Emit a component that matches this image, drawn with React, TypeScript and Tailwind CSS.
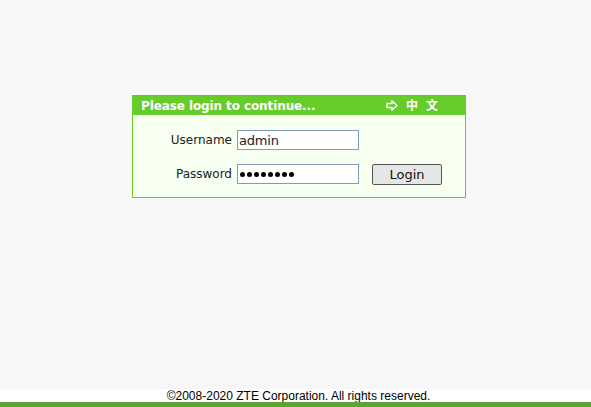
import React from "react";

export default function App() {
  return (
    <div className="min-h-screen h-[407px] flex flex-col bg-[#f7f7f7]" style={{ fontFamily: "'DejaVu Sans', Verdana, sans-serif" }}>
      <div className="flex-1">
        <div className="ml-[132px] mt-[95px] w-[334px] h-[103px] border border-[#66cc2a] bg-[#f6fff0] flex flex-col">
          <div className="h-[19px] bg-[#66cc2a] flex items-center justify-between pl-[8px] pr-[27px] text-white font-bold text-[12px] leading-none">
            <span className="tracking-[-0.1px]">Please login to continue...</span>
            <span className="flex items-center gap-[8px] text-[12px]" style={{ fontFamily: "'DejaVu Sans', 'Noto Sans CJK SC', sans-serif" }}>
              <svg width="12" height="11" viewBox="0 0 12 11" className="block">
                <path d="M1 3.5 H6 V0.9 L11 5.5 L6 10.1 V7.5 H1 Z" fill="none" stroke="white" strokeWidth="1.4" strokeLinejoin="miter" />
              </svg>
              <span>中</span>
              <span>文</span>
            </span>
          </div>
          <div className="flex flex-col text-[12px] text-[#222]" style={{ fontFamily: "'DejaVu Sans', Verdana, sans-serif" }}>
            <div className="flex items-center mt-[15px] h-[20px]">
              <span className="w-[104px] text-right pr-[5px]">Username</span>
              <input
                readOnly
                value="admin"
                className="w-[122px] h-[20px] border border-[#7f9db9] bg-white px-[1px] text-[13px] text-[#222] outline-none tracking-[-0.2px]"
                style={{ fontFamily: "'DejaVu Sans', Verdana, sans-serif" }}
              />
            </div>
            <div className="flex items-center mt-[14px] h-[20px]">
              <span className="w-[104px] text-right pr-[5px]">Password</span>
              <div className="w-[122px] h-[20px] border border-[#7f9db9] bg-white pl-[2px] flex items-center gap-[2px]">
                {Array.from({ length: 8 }).map((_, i) => (
                  <span key={i} className="w-[5px] h-[5px] rounded-full bg-black" />
                ))}
              </div>
              <button
                className="ml-[13px] mt-[1px] w-[70px] h-[21px] border border-[#555] rounded-[2px] bg-[#e6e6e6] text-[13px] text-[#111] leading-none"
                style={{ fontFamily: "'DejaVu Sans', Verdana, sans-serif" }}
              >
                Login
              </button>
            </div>
          </div>
        </div>
      </div>
      <div className="h-[13px] bg-white flex items-center justify-center pl-[6px] text-[12px] text-black leading-none" style={{ fontFamily: "'Liberation Sans', Arial, sans-serif" }}>
        ©2008-2020 ZTE Corporation. All rights reserved.
      </div>
      <div className="h-[5px] bg-[#5ca52e]" />
    </div>
  );
}
